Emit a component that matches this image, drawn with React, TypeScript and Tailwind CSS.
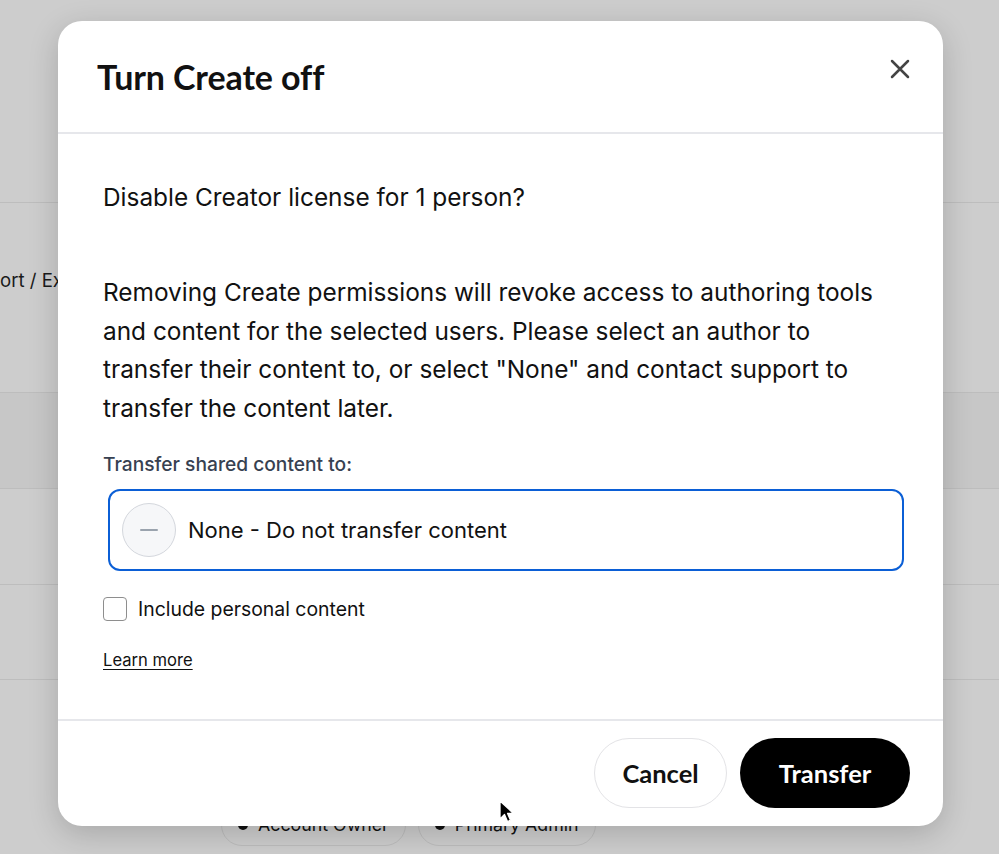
import React from "react";

function Pill({ label }: { label: string }) {
  return (
    <div className="flex h-[42px] items-center gap-[10px] rounded-full border border-[#bdbdbd] pl-[16px] pr-[16px] text-[17.8px] text-[#111]" style={{ fontFamily: "Inter, 'Liberation Sans', sans-serif" }}>
      <span className="h-[10px] w-[10px] rounded-full bg-[#111]" />
      <span>{label}</span>
    </div>
  );
}

export default function App() {
  return (
    <div className="relative h-[854px] w-[999px] overflow-hidden bg-[#cdcdcd]" style={{ fontFamily: "Inter, 'Liberation Sans', sans-serif" }}>
      {/* background page (dimmed) */}
      <div className="flex flex-col">
        <div className="h-[203px] border-b border-[#bdbdbd]" />
        <div className="flex h-[190px] items-start border-b border-[#bdbdbd] pt-[64px]">
          <span className="whitespace-nowrap text-[18.6px] leading-[26px] text-[#1a1a1a]">ort / Export</span>
        </div>
        <div className="h-[96px] border-b border-[#bdbdbd] bg-[#c7c7c7]" />
        <div className="h-[96px] border-b border-[#bdbdbd]" />
        <div className="h-[95px] border-b border-[#bdbdbd]" />
        <div className="flex gap-[12px] pl-[221px] pt-[124px]">
          <Pill label="Account Owner" />
          <Pill label="Primary Admin" />
        </div>
      </div>

      {/* modal */}
      <div className="absolute left-[58px] top-[21px] flex h-[805px] w-[885px] flex-col rounded-[24px] bg-white shadow-[0_8px_30px_rgba(0,0,0,0.18)]">
        <div className="flex h-[113px] shrink-0 items-start justify-between border-b-2 border-[#e6e7eb] pl-[39px] pr-[32px]">
          <h1 className="pt-[33px] text-[34px] font-bold leading-[46px] tracking-[-0.1px] text-[#111]" style={{ fontFamily: "Lato, 'Liberation Sans', sans-serif" }}>
            Turn Create off
          </h1>
          <button className="mt-[37px] flex h-[22px] w-[22px] items-center justify-center text-[#444]" aria-label="Close">
            <svg width="20" height="20" viewBox="0 0 20 20" fill="none" stroke="currentColor" strokeWidth="2.5" strokeLinecap="round">
              <path d="M2 2 L18 18 M18 2 L2 18" />
            </svg>
          </button>
        </div>

        <div className="flex flex-1 flex-col border-b-2 border-[#e6e7eb] pl-[45px] pr-[39px] pt-[44px] text-[#111]">
          <p className="text-[24.4px] leading-[38px]">Disable Creator license for 1 person?</p>
          <p className="mt-[57px] text-[24.4px] leading-[38.5px]">
            Removing Create permissions will revoke access to authoring tools and content for the selected users. Please select an author to transfer their content to, or select "None" and contact support to transfer the content later.
          </p>
          <p className="mt-[24px] text-[19.2px] font-medium leading-[26px] text-[#374151]">Transfer shared content to:</p>
          <div className="ml-[5px] mt-[12px] flex h-[82px] items-center gap-[12px] rounded-[12px] border-2 border-[#0b5fd6] pl-[12px]">
            <div className="flex h-[54px] w-[54px] items-center justify-center rounded-full border border-[#d4d7dd] bg-[#f6f7f9]">
              <span className="h-[2px] w-[18px] rounded bg-[#9aa3ae]" />
            </div>
            <span className="text-[22px] leading-[30px] text-[#111]">None - Do not transfer content</span>
          </div>
          <label className="mt-[25px] flex items-center gap-[11px]">
            <span className="h-[24px] w-[24px] rounded-[4px] border border-[#8e8e8e] bg-white" />
            <span className="text-[19.4px] leading-[26px] text-[#111]">Include personal content</span>
          </label>
          <a className="mt-[26px] self-start text-[16.6px] leading-[24px] text-[#111] underline underline-offset-[3px]">Learn more</a>
        </div>

        <div className="flex h-[105px] shrink-0 items-center justify-end gap-[13px] pb-[1px] pr-[33px]">
          <button className="h-[70px] w-[133px] rounded-full border border-[#e3e3e6] bg-white text-[25.5px] font-bold text-[#111]" style={{ fontFamily: "Lato, 'Liberation Sans', sans-serif" }}>
            Cancel
          </button>
          <button className="h-[70px] w-[170px] rounded-full bg-black text-[25.5px] font-bold text-white" style={{ fontFamily: "Lato, 'Liberation Sans', sans-serif" }}>
            Transfer
          </button>
        </div>
      </div>

      {/* cursor */}
      <svg className="absolute left-[499px] top-[800px]" width="16" height="24" viewBox="0 0 16 24">
        <path d="M1 1 L1 19 L5.5 14.5 L8.5 21.5 L11.5 20.2 L8.6 13.4 L14.5 13.4 Z" fill="#000" stroke="#fff" strokeWidth="1.3" strokeLinejoin="round" />
      </svg>
    </div>
  );
}
